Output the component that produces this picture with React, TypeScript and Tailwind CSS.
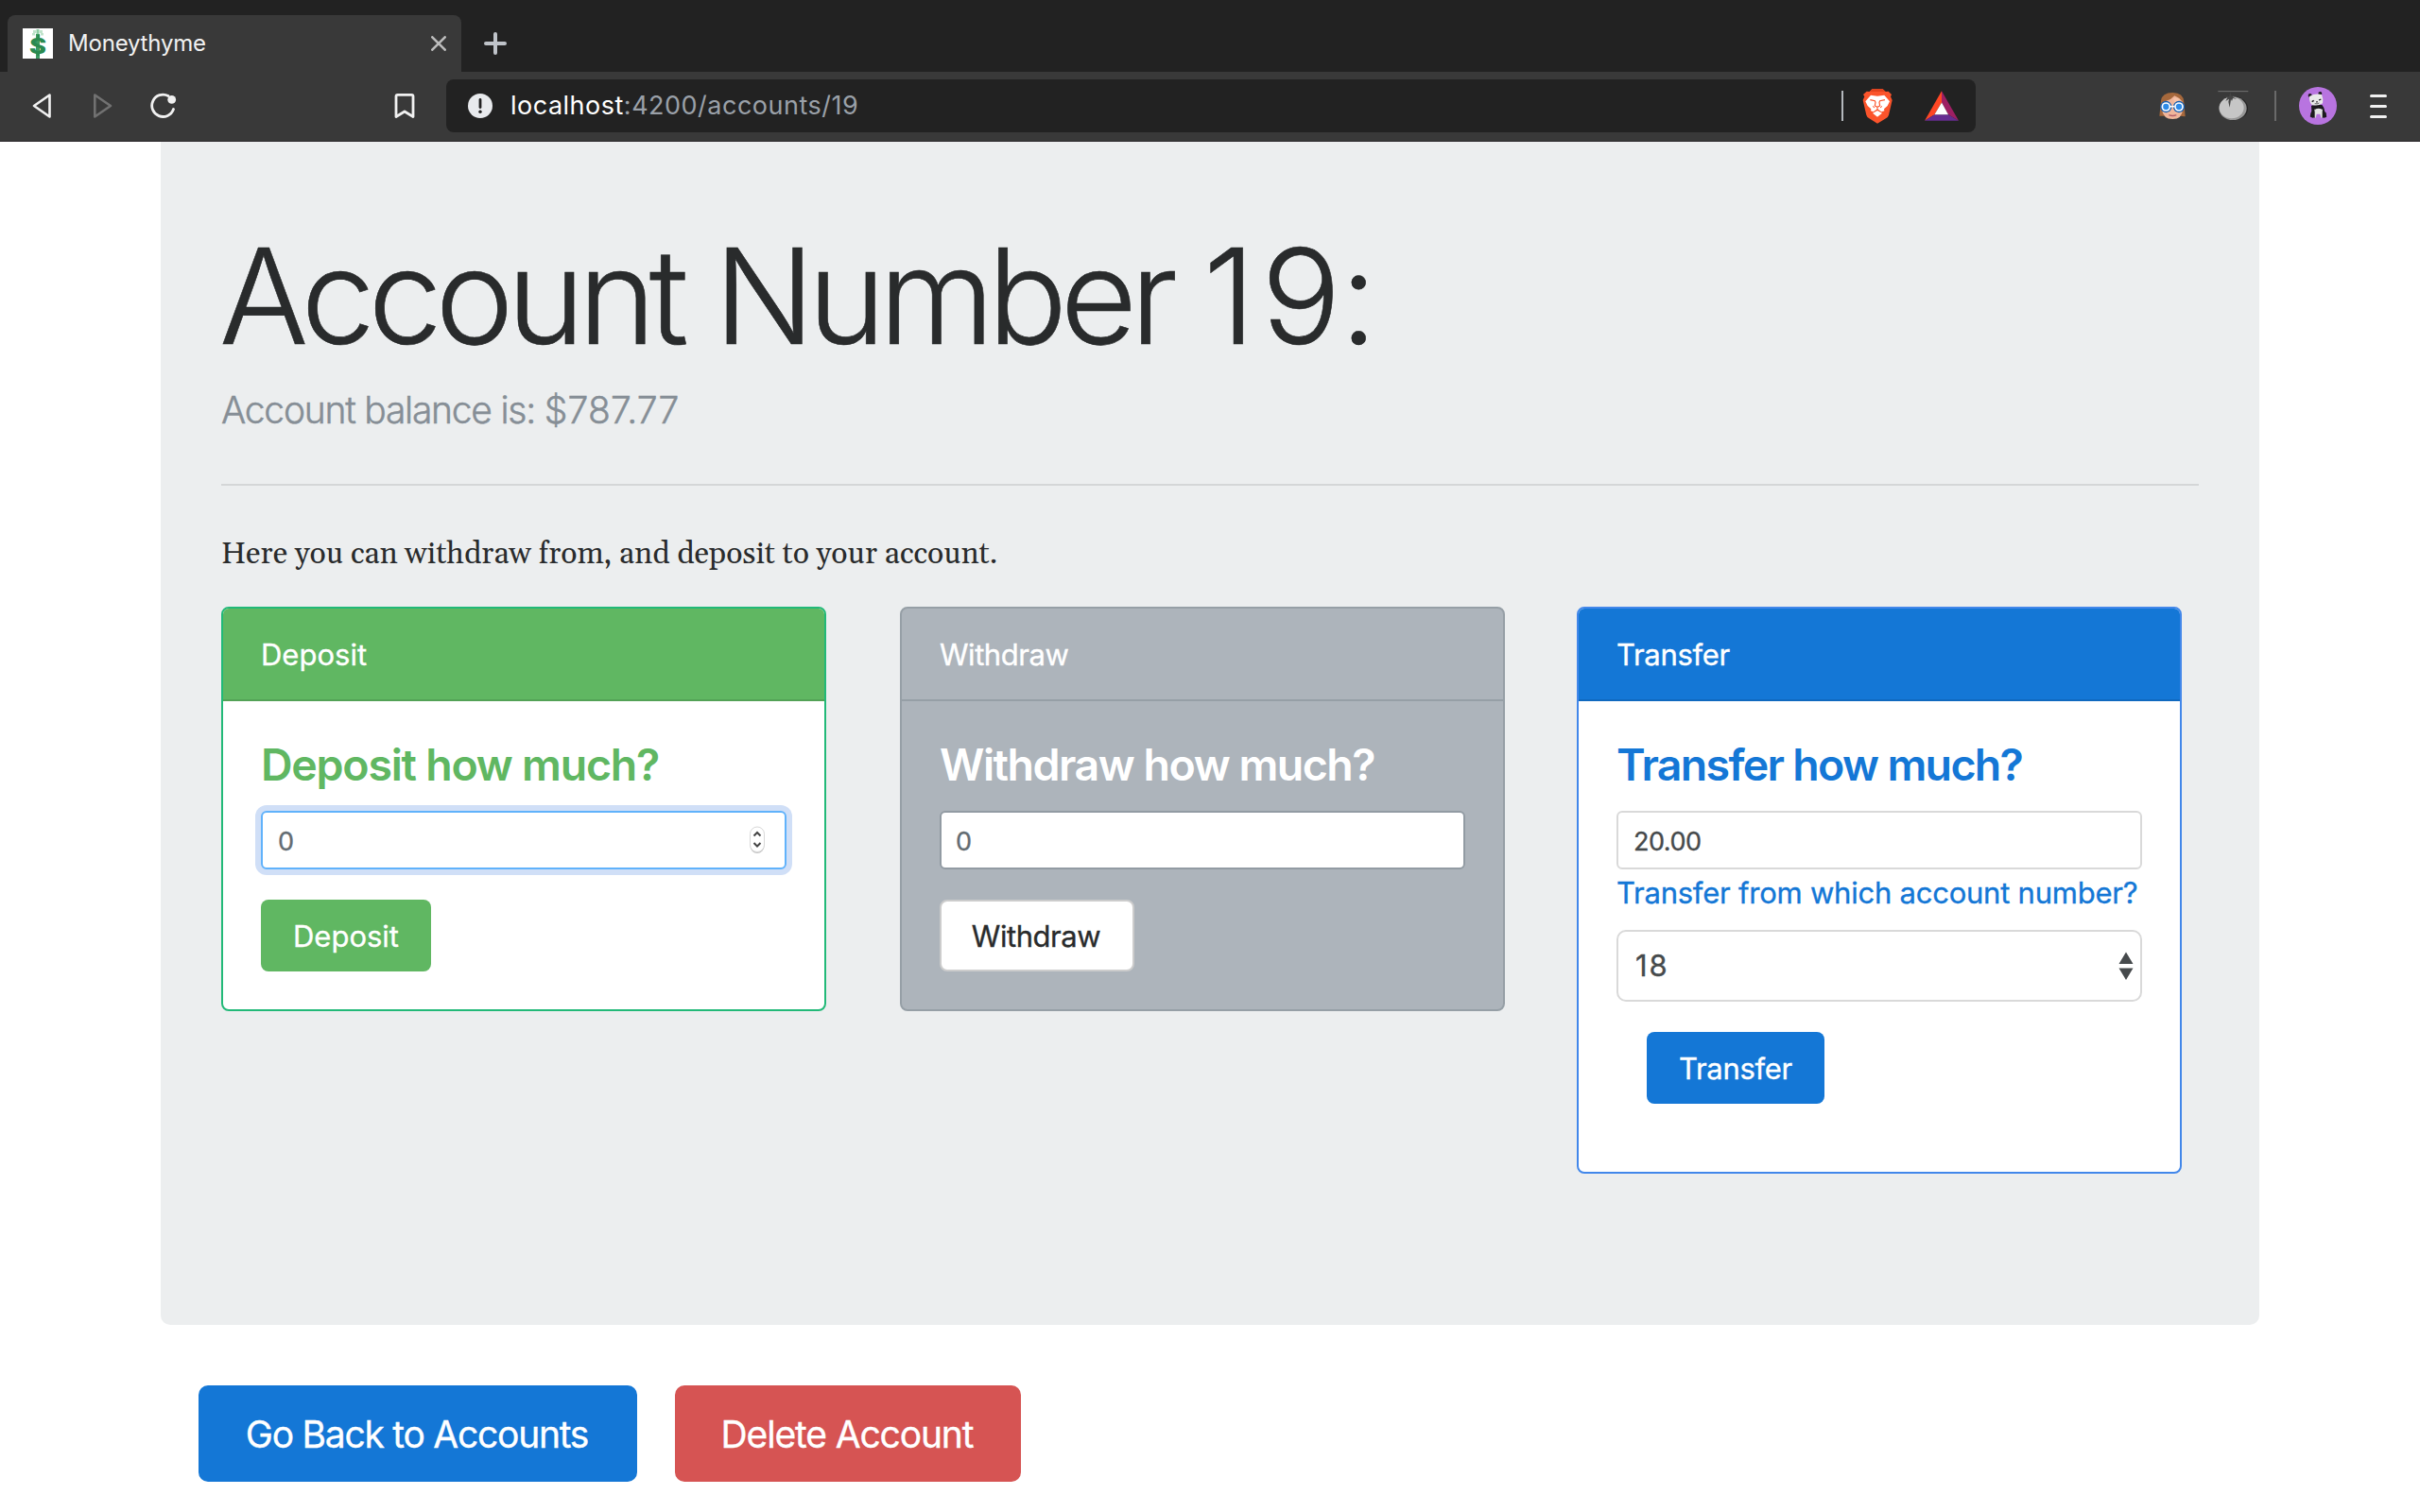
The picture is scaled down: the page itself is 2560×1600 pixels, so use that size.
import React from 'react';

function Favicon() {
  return (
    <svg className="block h-8 w-8 overflow-visible bg-white" viewBox="0 0 32 32">
      <g fill="#bfe3cb">
        <rect x="11" y="2" width="3" height="3" />
        <rect x="18" y="2" width="3" height="3" />
        <rect x="10" y="5" width="3" height="2.500" />
        <rect x="19" y="5" width="3" height="2.500" />
        <rect x="14.500" y="1" width="3" height="8" fill="#8fcfa5" />
      </g>
      <rect x="14" y="6" width="4" height="26" fill="#3d9b62" />
      <text x="16" y="27" textAnchor="middle" fontFamily="Roboto" fontWeight="900" fontSize="23" textLength="19" lengthAdjust="spacingAndGlyphs" fill="#2a8a50">$</text>
    </svg>
  );
}

function BraveIcon() {
  return (
    <svg className="block h-[37px] w-8" viewBox="89 28 96 111">
      <path d="M112 37 L120 29 L154 29 L163 37 L172 36 L182 46 L179 53 L184 64 L173 111 Q171 118 164 122 L137 138 L111 122 Q104 118 102 111 L91 64 L96 53 L92 46 L103 36 Z" fill="#fb542b" />
      <path d="M112 37 L120 29 L154 29 L163 37 Z" fill="#e2431e" />
      <path d="M116 48 L137 51 L159 48 L176 68 L169 82 L158 92 L159 98 L150 101 L137 92 L124 101 L116 98 L117 92 L106 82 L99 68 Z" fill="#fff" />
      <path d="M114 63 L129 66 L131 71 L129 82 L137 86 L145 82 L143 71 L145 66 L161 63" fill="none" stroke="#fb542b" strokeWidth="3.500" />
      <path d="M137 87 V94 M122 83 L128 88 M152 83 L146 88" fill="none" stroke="#fb542b" strokeWidth="3" />
      <path d="M137 97 L152 105 L137 117 L122 105 Z" fill="#fff" />
    </svg>
  );
}

function BatIcon() {
  return (
    <svg className="block h-8 w-9" viewBox="288 36 108 95">
      <path d="M342 36 L288 131 L319 111 L342 73 Z" fill="#ff4724" />
      <path d="M342 36 L396 131 L363 111 L342 73 Z" fill="#9e1f63" />
      <path d="M288 131 L396 131 L363 111 L319 111 Z" fill="#662d91" />
      <path d="M342 73 L319 111 L363 111 Z" fill="#fff" />
    </svg>
  );
}

function GirlIcon() {
  return (
    <svg className="block h-[30px] w-[30px]" viewBox="70 51 90 90">
      <path d="M79 80 Q82 54 116 54 Q150 54 152 84 L156 130 L138 128 L92 128 L74 128 Z" fill="#a5683c" />
      <path d="M82 92 Q84 82 96 80 Q112 76 122 64 Q138 70 148 84 V108 Q146 138 116 138 Q86 138 82 108 Z" fill="#f0b69b" />
      <path d="M118 72 Q132 68 140 78 L122 86 Z" fill="#f5c3a9" />
      <circle cx="95" cy="99" r="18.500" fill="#145db0" />
      <circle cx="136" cy="99" r="18.500" fill="#145db0" />
      <circle cx="95" cy="99" r="14.500" fill="#fff" />
      <circle cx="136" cy="99" r="14.500" fill="#fff" />
      <circle cx="95" cy="99" r="9.500" fill="#2e8be8" />
      <circle cx="136" cy="99" r="9.500" fill="#2e8be8" />
      <path d="M109 98 H122" stroke="#fff" strokeWidth="5" />
      <path d="M104 125 Q116 130 128 125" fill="none" stroke="#b5606a" strokeWidth="4" />
    </svg>
  );
}

function TomatoIcon() {
  return (
    <svg className="block h-8 w-[33px]" viewBox="257 47 99 96">
      <rect x="258" y="47" width="96" height="3.500" fill="#6a6a6a" />
      <ellipse cx="307" cy="103" rx="46" ry="38" fill="#222" />
      <ellipse cx="305" cy="103" rx="44" ry="37" fill="#979797" />
      <ellipse cx="301" cy="101" rx="39" ry="34" fill="#c6c6c6" />
      <path d="M297 50 L301 65 L312 58 L305 67 L318 74 L305 71 L302 80 L299 74 L295 100 L291 82 L293 73 L282 80 L288 69 L278 64 L294 65 Z" fill="#444" />
    </svg>
  );
}

function PandaIcon() {
  return (
    <svg className="block h-10 w-10" viewBox="516 36 120 120">
      <circle cx="576" cy="96" r="60" fill="#b874e0" />
      <circle cx="551" cy="63" r="6" fill="#1c1a1e" />
      <circle cx="583" cy="57" r="6" fill="#1c1a1e" />
      <path d="M555 96 Q562 90 584 92 Q596 95 597 112 L604 130 L596 134 L590 116 L566 116 L560 134 L551 130 L556 112 Z" fill="#1c1a1e" />
      <path d="M566 106 Q577 98 590 106 L594 132 L586 134 L583 122 H572 L569 134 L560 132 Z" fill="#e4e4e4" />
      <path d="M566 94 H590 V108 Q578 100 566 108 Z" fill="#1c1a1e" />
      <path d="M554 118 L566 112 V134 L553 132 Z M602 118 L590 112 V134 L603 132 Z" fill="#1c1a1e" />
      <path d="M549 66 Q566 56 588 60 Q594 74 591 88 Q574 99 556 92 Q548 82 549 66 Z" fill="#e9e9e9" />
      <path d="M557 83 L563 79 M579 78 L586 75 M571 84 L575 83" fill="none" stroke="#1c1a1e" strokeWidth="4" />
      <path d="M566 89 Q574 91 580 87" fill="none" stroke="#1c1a1e" strokeWidth="2" />
    </svg>
  );
}

function Browser() {
  return (
    <header className="h-[150px] bg-[#222222]">
      <div className="flex h-[76px] items-end pl-2">
        <div className="flex h-[60px] w-[480px] items-center rounded-t-lg bg-[#393939] px-4">
          <Favicon />
          <span className="ml-4 text-[24px] tracking-[-0.2px] text-[#f1f1f1]">Moneythyme</span>
          <svg className="ml-auto block h-4 w-4" viewBox="0 0 16 16" stroke="#bcbcbc" strokeWidth="2.600" strokeLinecap="round">
            <path d="M1.300 1.300 L14.700 14.700 M14.700 1.300 L1.300 14.700" />
          </svg>
        </div>
        <svg className="mb-[18px] ml-6 block h-6 w-6" viewBox="0 0 24 24" stroke="#bfc3c9" strokeWidth="4" strokeLinecap="round">
          <path d="M12 2 V22 M2 12 H22" />
        </svg>
      </div>
      <div className="flex h-[74px] items-center border-b border-[#2d292d] bg-[#393939] pb-px">
        <svg className="ml-[34px] block h-[26px] w-5" viewBox="0 0 20 26" fill="none" stroke="#f1f1f1" strokeWidth="2.600" strokeLinejoin="round">
          <path d="M18.500 1.500 V24.500 L2 13 Z" />
        </svg>
        <svg className="ml-[45px] block h-[26px] w-5" viewBox="0 0 20 26" fill="none" stroke="#717171" strokeWidth="2.600" strokeLinejoin="round">
          <path d="M1.300 1.500 V24.500 L18 13 Z" />
        </svg>
        <svg className="ml-10 block h-7 w-7" viewBox="0 0 28 28" fill="none">
          <path d="M24.500 17.500 A11.700 11.700 0 1 1 19 3.500" stroke="#f1f1f1" strokeWidth="2.800" strokeLinecap="round" />
          <circle cx="22.700" cy="7.400" r="4.400" fill="#f1f1f1" />
        </svg>
        <svg className="ml-[230px] block h-[26px] w-[22px]" viewBox="0 0 22 26" fill="none" stroke="#f1f1f1" strokeWidth="2.800" strokeLinejoin="round">
          <path d="M2 3 Q2 1.400 3.600 1.400 H18.400 Q20 1.400 20 3 V24.500 L11 19 L2 24.500 Z" />
        </svg>
        <div className="ml-[33px] flex h-14 w-[1618px] items-center rounded-lg bg-[#222222] pl-[23px]">
          <svg className="block h-[26px] w-[26px]" viewBox="0 0 26 26">
            <circle cx="13" cy="13" r="13" fill="#e8eaed" />
            <path d="M13 6.500 V14.500" stroke="#222" strokeWidth="2.800" strokeLinecap="round" />
            <circle cx="13" cy="19.300" r="1.700" fill="#222" />
          </svg>
          <span className="ml-[19px] pt-px text-[27px] tracking-[0.5px] text-white">
            localhost<span className="text-[#9aa0a8]">:4200/accounts/19</span>
          </span>
          <div className="ml-auto h-8 w-0.5 bg-[#b4b8bd]" />
          <div className="mr-[34px] ml-5">
            <BraveIcon />
          </div>
          <div className="mr-[18px]">
            <BatIcon />
          </div>
        </div>
        <div className="ml-[193px]">
          <GirlIcon />
        </div>
        <div className="ml-[33px]">
          <TomatoIcon />
        </div>
        <div className="ml-[27px] h-8 w-0.5 bg-[#6a6a6a]" />
        <div className="ml-6">
          <PandaIcon />
        </div>
        <div className="ml-[35px] flex w-[18px] flex-col gap-2">
          <div className="h-[3px] rounded-full bg-[#f1f1f1]" />
          <div className="h-[3px] rounded-full bg-[#f1f1f1]" />
          <div className="h-[3px] rounded-full bg-[#f1f1f1]" />
        </div>
      </div>
    </header>
  );
}

export default function App() {
  return (
    <div className="h-[1600px] w-[2560px] overflow-hidden bg-white font-[Inter,sans-serif] text-[#292b2c]">
      <Browser />
      <main className="mx-[170px] h-[1252px] rounded-b-[10px] bg-[#eceeef] px-16 pt-[84px]">
        <h1 className="-ml-0.5 text-[140px] leading-[158px] font-light tracking-[-7.200px] [-webkit-text-stroke:0.6px] [word-spacing:2px]">
          Account Number <span className="tracking-[6px]">1</span>
          <span className="tracking-[-1px]">9:</span>
        </h1>
        <p className="mt-3 text-[39px] leading-[60px] font-light tracking-[-1.250px] text-[#868e96] [-webkit-text-stroke:0.5px]">
          Account balance is: <span className="tracking-[0.2px]">$787.77</span>
        </p>
        <hr className="mt-12 border-0 border-t-2 border-[#d4d6d7]" />
        <p className="mt-[49px] font-[Gelasio,Georgia,serif] text-[32px] leading-[48px]">Here you can withdraw from, and deposit to your account.</p>
        <div className="mt-[31px] flex items-start text-[31px] [-webkit-text-stroke:0.35px]">
          <section className="h-[428px] w-[640px] overflow-hidden rounded-lg border-2 border-[#22b978] bg-white">
            <div className="h-[98px] border-b-2 border-[#53a257] bg-[#60b762] px-10 pt-6 leading-[50px] text-white">Deposit</div>
            <div className="px-10 pt-[41px]">
              <h2 className="text-[46.500px] leading-[53px] font-semibold tracking-[-1.250px] text-[#60b762] [-webkit-text-stroke:0]">Deposit how much?</h2>
              <div className="mt-[22px] flex h-[62px] items-center rounded-md border-2 border-[#60b2fb] bg-white pr-5 pl-4 text-[27px] text-[#636c72] ring-6 ring-[#d0dff7]">
                <span className="pt-[5px]">0</span>
                <svg className="ml-auto block h-[30px] w-[18px]" viewBox="0 0 18 30" fill="none">
                  <rect x="1.500" y="2" width="15" height="27" rx="7.500" fill="#c4c4c4" />
                  <rect x="1.500" y="1" width="15" height="26.500" rx="7.500" fill="#fff" stroke="#d8d8d8" />
                  <path d="M5.500 10.500 L9 7 L12.500 10.500 M5.500 18 L9 21.500 L12.500 18" stroke="#444" strokeWidth="2" />
                </svg>
              </div>
              <div className="mt-8 h-[76px] w-[180px] rounded-lg bg-[#60b762] text-center leading-[77px] text-white">Deposit</div>
            </div>
          </section>
          <section className="ml-[78px] h-[428px] w-[640px] overflow-hidden rounded-lg border-2 border-[#969fa6] bg-[#adb4bb] text-white">
            <div className="h-[98px] border-b-2 border-[#969fa6] pt-6 pr-10 pl-10 leading-[50px] tracking-[-0.45px]">Withdraw</div>
            <div className="px-10 pt-[41px]">
              <h2 className="text-[46.500px] leading-[53px] font-semibold tracking-[-1.500px] [-webkit-text-stroke:0]">Withdraw how much?</h2>
              <div className="mt-[22px] flex h-[62px] items-center rounded-md border-2 border-[#929ba3] bg-white px-[15px] text-[27px] text-[#636c72]">
                <span className="pt-[5px]">0</span>
              </div>
              <div className="mt-8 h-[76px] w-[206px] rounded-lg border-2 border-[#cccccc] bg-white pr-0.5 text-center leading-[73px] tracking-[-0.45px] text-[#292b2c]">Withdraw</div>
            </div>
          </section>
          <section className="ml-[76px] h-[600px] w-[640px] overflow-hidden rounded-lg border-2 border-[#4287ea] bg-white">
            <div className="h-[98px] border-b-2 border-[#1069bf] bg-[#1477d6] px-10 pt-6 leading-[50px] tracking-[-0.3px] text-white">Transfer</div>
            <div className="px-10 pt-[41px]">
              <h2 className="text-[46.500px] leading-[53px] font-semibold tracking-[-1.680px] text-[#1477d6] [-webkit-text-stroke:0]">Transfer how much?</h2>
              <div className="mt-[22px] flex h-[62px] items-center rounded-md border-2 border-[#d9d9d9] bg-white px-4 text-[27px] tracking-[-0.5px] text-[#464a4c]">
                <span className="pt-[5px]">20.00</span>
              </div>
              <p className="pt-px leading-[48px] tracking-[-0.230px] whitespace-nowrap text-[#1477d6]">Transfer from which account number?</p>
              <div className="mt-[15px] flex h-[76px] items-center rounded-[10px] border-2 border-[#d9d9d9] bg-white pr-[7px] pl-[18px] text-[#464a4c]">
                <span className="tracking-[2px]">18</span>
                <svg className="ml-auto block h-[30px] w-4" viewBox="0 0 16 30" fill="#464a4c">
                  <path d="M8 0.500 L15.500 13 H0.500 Z M8 30 L15.500 17.500 H0.500 Z" />
                </svg>
              </div>
              <div className="mt-8 ml-8 h-[76px] w-[188px] rounded-lg bg-[#1477d6] text-center leading-[77px] tracking-[-0.3px] text-white">Transfer</div>
            </div>
          </section>
        </div>
      </main>
      <div className="mt-16 ml-[210px] flex gap-10 text-[39px] leading-[103px] text-white [-webkit-text-stroke:0.35px]">
        <div className="h-[102px] w-[464px] rounded-[10px] bg-[#1477d6] pr-0.5 text-center tracking-[-1.250px]">Go Back to Accounts</div>
        <div className="h-[102px] w-[366px] rounded-[10px] bg-[#d65453] pr-0.5 text-center tracking-[-1.150px]">Delete Account</div>
      </div>
    </div>
  );
}
